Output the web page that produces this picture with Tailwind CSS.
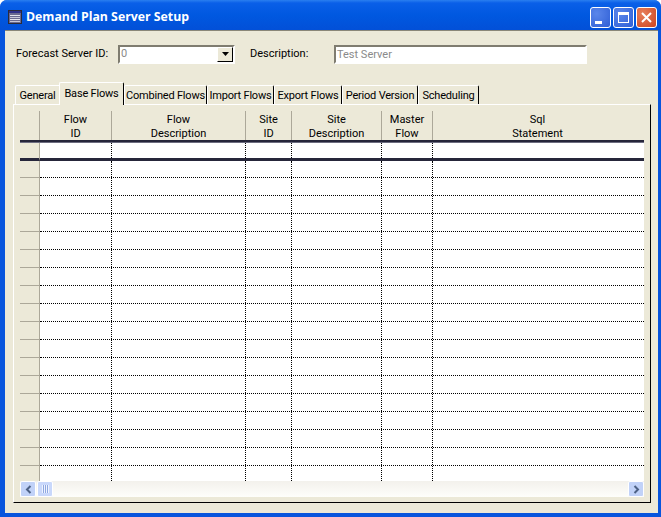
<!DOCTYPE html>
<html>
<head>
  <meta charset="UTF-8">
  <script src="https://cdn.jsdelivr.net/npm/@tailwindcss/browser@4"></script>
  <title>Demand Plan Server Setup</title>
</head>
<body class="bg-white overflow-hidden font-['Roboto',sans-serif] text-[11px] text-black">
  <div class="w-[661px] h-[517px] flex flex-col bg-[#0855dd] rounded-t-[7px] overflow-hidden">
    <!-- title bar -->
    <div class="h-[30px] shrink-0 flex items-center pt-[4px] pl-[7px] pr-[4px] bg-[linear-gradient(180deg,#2a7ff0_0,#0a5fe8_3px,#0058e0_50%,#0250d8_100%)]">
      <svg width="16" height="16" viewBox="0 0 16 16" class="mr-[3px]">
        <rect x="1.500" y="1.500" width="13" height="13" fill="#6a6a90" stroke="#2b2b3a"/>
        <rect x="2" y="2" width="12" height="2" fill="#30308a"/>
        <rect x="3" y="6" width="10" height="1" fill="#e4e4ee"/>
        <rect x="3" y="8" width="10" height="1" fill="#c8c8d8"/>
        <rect x="3" y="10" width="10" height="1" fill="#e4e4ee"/>
        <rect x="3" y="12" width="10" height="1" fill="#c8c8d8"/>
      </svg>
      <span class="flex-1 text-white font-bold text-[12.300px] font-['Open_Sans',sans-serif]">Demand Plan Server Setup</span>
      <div class="flex gap-[2px]">
        <div class="w-[21px] h-[21px] rounded-[3px] border border-white bg-[radial-gradient(circle_at_30%_30%,#5a86ea,#2f5fd6)] flex items-end pl-[4px] pb-[3px]">
          <div class="w-[7px] h-[3px] bg-white"></div>
        </div>
        <div class="w-[21px] h-[21px] rounded-[3px] border border-white bg-[radial-gradient(circle_at_30%_30%,#5a86ea,#2f5fd6)] flex items-center justify-center">
          <div class="w-[11px] h-[11px] border border-white border-t-[3px]"></div>
        </div>
        <div class="w-[21px] h-[21px] rounded-[3px] border border-white bg-[radial-gradient(circle_at_30%_30%,#e8805c,#cc4420)] flex items-center justify-center">
          <svg width="11" height="11" viewBox="0 0 11 11"><path d="M1 1L10 10M10 1L1 10" stroke="#fff" stroke-width="2"/></svg>
        </div>
      </div>
    </div>

    <!-- client -->
    <div class="h-[483px] ml-[5px] mr-[3px] bg-[#ece9d8] pt-[13px] pl-[8px] border-t border-[#8a8778]">
      <div class="h-[20px] flex items-center pl-[3px] whitespace-nowrap">
        <span class="w-[102px]">Forecast Server ID:</span>
        <div class="w-[117px] h-[19px] bg-white border-2 border-t-[#7f7c70] border-l-[#7f7c70] border-r-white border-b-white flex items-center justify-between pl-[1px] text-[#8a8a8a]">
          <span>0</span>
          <div class="w-[16px] h-[15px] bg-[#ece9d8] border border-t-white border-l-white border-r-black border-b-black flex items-center justify-center">
            <svg width="7" height="4" viewBox="0 0 7 4"><path d="M0 0H7L3.500 4Z" fill="#000"/></svg>
          </div>
        </div>
        <span class="ml-[15px] w-[84px] mt-[1px]">Description:</span>
        <div class="w-[253px] h-[19px] bg-white border-2 border-t-[#7f7c70] border-l-[#7f7c70] border-r-white border-b-white flex items-center pl-[1px] pt-[3px] text-[#8a8a8a]">Test Server</div>
      </div>

      <!-- tabs -->
      <div class="flex items-end h-[22px] mt-[18px] pl-[2px] whitespace-nowrap tracking-[-0.2px]">
        <div class="w-[44px] h-[19px] pt-[2px] rounded-tl-[2px] bg-[#ece9d8] border-t border-l border-white flex items-center justify-center">General</div>
        <div class="relative z-10 w-[65px] h-[23px] -mb-[1px] rounded-t-[2px] bg-[#ece9d8] border-t border-l border-r border-t-white border-l-white border-r-black flex items-center justify-center">Base Flows</div>
        <div class="w-[83px] h-[19px] pt-[2px] rounded-t-[2px] bg-[#ece9d8] border-t border-l border-r border-t-white border-l-white border-r-black flex items-center justify-center">Combined Flows</div>
        <div class="w-[67px] h-[19px] pt-[2px] rounded-t-[2px] bg-[#ece9d8] border-t border-l border-r border-t-white border-l-white border-r-black flex items-center justify-center">Import Flows</div>
        <div class="w-[68px] h-[19px] pt-[2px] rounded-t-[2px] bg-[#ece9d8] border-t border-l border-r border-t-white border-l-white border-r-black flex items-center justify-center">Export Flows</div>
        <div class="w-[76px] h-[19px] pt-[2px] rounded-t-[2px] bg-[#ece9d8] border-t border-l border-r border-t-white border-l-white border-r-black flex items-center justify-center">Period Version</div>
        <div class="w-[61px] h-[19px] pt-[2px] rounded-t-[2px] bg-[#ece9d8] border-t border-l border-r border-t-white border-l-white border-r-black flex items-center justify-center">Scheduling</div>
      </div>

      <!-- tab panel -->
      <div class="w-[638px] h-[399px] border border-t-white border-l-white border-r-black border-b-black pt-[6px] px-[6px]">
        <div class="flex h-[29px] bg-[#ece9d8] text-center leading-[14px]">
          <div class="w-[20px] border-r border-[#aca899]"></div>
          <div class="w-[72px] border-r border-[#aca899] pt-[2px]">Flow<br>ID</div>
          <div class="w-[134px] border-r border-[#aca899] pt-[2px]">Flow<br>Description</div>
          <div class="w-[46px] border-r border-[#aca899] pt-[2px]">Site<br>ID</div>
          <div class="w-[90px] border-r border-[#aca899] pt-[2px]">Site<br>Description</div>
          <div class="w-[51px] border-r border-[#aca899] pt-[2px]">Master<br>Flow</div>
          <div class="flex-1 pt-[2px] pr-[2px]">Sql<br>Statement</div>
        </div>
        <div class="h-[3px] bg-[#26263a] border-b border-[#6d6d80]"></div>
        <div id="rows"></div>
        <!-- scrollbar -->
        <div class="h-[16px] flex justify-between bg-gradient-to-b from-[#f3f1ec] to-[#fefefb]">
          <div class="flex gap-[1px]">
            <div class="w-[16px] h-[16px] rounded-[2px] border border-white bg-[#c1d2f8] flex items-center justify-center">
              <svg width="7" height="9" viewBox="0 0 7 9"><path d="M5.500 1L2 4.500L5.500 8" fill="none" stroke="#4d6185" stroke-width="2"/></svg>
            </div>
            <div class="w-[16px] h-[16px] rounded-[2px] border border-white bg-[#c9d8fb] flex items-center justify-center">
              <div class="w-[7px] h-[8px] bg-[repeating-linear-gradient(90deg,#eef3ff_0,#eef3ff_1px,#8fa8e0_1px,#8fa8e0_2px)]"></div>
            </div>
          </div>
          <div class="w-[16px] h-[16px] rounded-[2px] border border-white bg-[#c1d2f8] flex items-center justify-center">
            <svg width="7" height="9" viewBox="0 0 7 9"><path d="M1.500 1L5 4.500L1.500 8" fill="none" stroke="#4d6185" stroke-width="2"/></svg>
          </div>
        </div>
      </div>
    </div>
  </div>
  <script>
    // first row is the new-record row, the rest are blank rows with dotted lines
    var html = '';
    for (var i = 0; i < 19; i++) {
      var h = i === 0 ? 'h-[18px]' : i === 1 ? 'h-[17px]' : i === 18 ? 'h-[15px]' : 'h-[18px]';
      var line = i === 0 ? 'border-b-[3px] border-b-[#26263a]' : i === 18 ? '' : 'border-b border-dotted border-b-black';
      var head = i === 0 ? 'border-b-[3px] border-b-[#26263a]' : i === 18 ? '' : 'border-b border-b-[#aca899]';
      html += '<div class="flex bg-white ' + h + '">' +
        '<div class="w-[20px] bg-[#ece9d8] border-r border-r-[#aca899] ' + head + '"></div>' +
        '<div class="flex-1 flex ' + line + '">' +
        '<div class="w-[72px] border-r border-dotted border-r-black"></div>' +
        '<div class="w-[134px] border-r border-dotted border-r-black"></div>' +
        '<div class="w-[46px] border-r border-dotted border-r-black"></div>' +
        '<div class="w-[90px] border-r border-dotted border-r-black"></div>' +
        '<div class="w-[51px] border-r border-dotted border-r-black"></div>' +
        '</div></div>';
    }
    document.getElementById('rows').innerHTML = html;
  </script>
</body>
</html>
